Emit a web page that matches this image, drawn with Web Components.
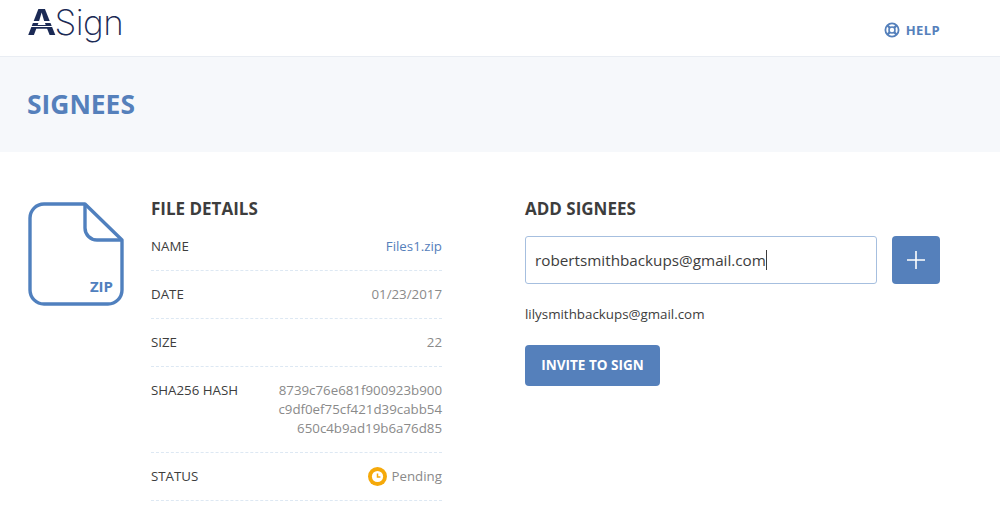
<!DOCTYPE html>
<html>
<head>
<meta charset="utf-8">
<title>Signees</title>
<style>
  html, body { margin: 0; background: #fff; }
  body { font-family: "Open Sans", sans-serif; color: #3d3d3d; overflow: hidden; }
</style>
</head>
<body>
<app-header></app-header>
<page-title>SIGNEES</page-title>
<main-layout>
  <file-icon slot="icon"></file-icon>
  <file-details slot="details">
    <detail-row label="NAME"><span style="color:#5580bb">Files1.zip</span></detail-row>
    <detail-row label="DATE">01/23/2017</detail-row>
    <detail-row label="SIZE">22</detail-row>
    <detail-row label="SHA256 HASH" tall>8739c76e681f900923b900<br>c9df0ef75cf421d39cabb54<br>650c4b9ad19b6a76d85</detail-row>
    <detail-row label="STATUS"><status-pending>Pending</status-pending></detail-row>
  </file-details>
  <add-signees slot="signees"></add-signees>
</main-layout>

<script>
class AppHeader extends HTMLElement {
  constructor() {
    super();
    this.attachShadow({ mode: 'open' }).innerHTML = `
      <style>
        :host { display: flex; justify-content: space-between; align-items: flex-start; height: 56px; border-bottom: 1px solid #e9edf3; padding: 0 60px 0 27px; }
        .logo { display: flex; align-items: baseline; color: #1b2a55; }
        .a { display: inline-block; padding: 0 1px; margin: 0 -1px; font: 600 35px/44px Inter, sans-serif; color: transparent;
             transform: scaleX(1.14); transform-origin: left;
             background: linear-gradient(#1b2a55 0 21.5px, #fff 21.5px 23px, #1b2a55 23px 26px, #fff 26px 27.5px, #1b2a55 27.5px);
             -webkit-background-clip: text; background-clip: text; }
        .sign { margin-left: 2px; font: 200 35px/44px Inter, sans-serif; letter-spacing: -.5px; }
        .help { display: flex; align-items: center; gap: 6px; margin-top: 21px; color: #5580bb; font: 700 13px/18px "Open Sans", sans-serif; letter-spacing: .4px; }
        svg { display: block; }
      </style>
      <div class="logo"><span class="a">A</span><span class="sign">Sign</span></div>
      <div class="help">
        <svg width="16" height="16" viewBox="0 0 16 16" fill="none" stroke="#5580bb">
          <circle cx="8" cy="8" r="6.6" stroke-width="1.8"/>
          <circle cx="8" cy="8" r="3" stroke-width="1.6"/>
          <path d="M3.4 3.4l2.5 2.5M12.6 3.4l-2.5 2.5M3.4 12.6l2.5-2.5M12.6 12.6l-2.5-2.5" stroke-width="2.2"/>
        </svg>
        <span>HELP</span>
      </div>`;
  }
}
customElements.define('app-header', AppHeader);

class PageTitle extends HTMLElement {
  constructor() {
    super();
    this.attachShadow({ mode: 'open' }).innerHTML = `
      <style>
        :host { display: block; height: 95px; background: #f6f8fb; padding-left: 27px; color: #5580bb; font: 700 26.4px/95px "Open Sans", sans-serif; }
      </style>
      <slot></slot>`;
  }
}
customElements.define('page-title', PageTitle);

class MainLayout extends HTMLElement {
  constructor() {
    super();
    this.attachShadow({ mode: 'open' }).innerHTML = `
      <style>
        :host { display: grid; grid-template-columns: 123px 292px 351px; padding: 47px 0 0 28px; }
        .s { display: block; margin-left: 82px; width: 415px; }
      </style>
      <slot name="icon"></slot>
      <slot name="details"></slot>
      <div class="s"><slot name="signees"></slot></div>`;
  }
}
customElements.define('main-layout', MainLayout);

class FileIcon extends HTMLElement {
  constructor() {
    super();
    this.attachShadow({ mode: 'open' }).innerHTML = `
      <style>
        :host { display: block; position: relative; width: 96px; height: 104px; margin-top: 3px; }
        svg { display: block; }
        span { position: absolute; right: 11px; bottom: 10px; color: #5080be; font: 700 15px/20px "Open Sans", sans-serif; }
      </style>
      <svg width="96" height="104" viewBox="0 0 96 104" fill="none" stroke="#5080be" stroke-width="3.4" stroke-linejoin="round">
        <path d="M57 2H16A14 14 0 0 0 2 16V88A14 14 0 0 0 16 102H80A14 14 0 0 0 94 88V38Z"/>
        <path d="M57 2V26A12 12 0 0 0 69 38H94"/>
      </svg>
      <span>ZIP</span>`;
  }
}
customElements.define('file-icon', FileIcon);

class FileDetails extends HTMLElement {
  constructor() {
    super();
    this.attachShadow({ mode: 'open' }).innerHTML = `
      <style>
        :host { display: block; width: 291px; }
        h2 { margin: 0 0 4px; color: #3d3d3d; font: 700 17px/20px "Open Sans", sans-serif; }
      </style>
      <h2>FILE DETAILS</h2>
      <slot></slot>`;
  }
}
customElements.define('file-details', FileDetails);

class DetailRow extends HTMLElement {
  constructor() {
    super();
    const root = this.attachShadow({ mode: 'open' });
    root.innerHTML = `
      <style>
        :host { display: flex; justify-content: space-between; align-items: flex-start; box-sizing: border-box; height: 48px; padding-top: 14px; border-bottom: 1px dashed #dde8f3; font: 400 13.3px/19px "Open Sans", sans-serif; }
        :host([tall]) { height: 86px; }
        .label { color: #3d3d3d; }
        .value { color: #8a8a8a; text-align: right; }
      </style>
      <span class="label"></span>
      <span class="value"><slot></slot></span>`;
    root.querySelector('.label').textContent = this.getAttribute('label');
  }
}
customElements.define('detail-row', DetailRow);

class StatusPending extends HTMLElement {
  constructor() {
    super();
    this.attachShadow({ mode: 'open' }).innerHTML = `
      <style>
        :host { display: inline-flex; align-items: center; gap: 5px; }
        svg { display: block; }
      </style>
      <svg width="19" height="19" viewBox="0 0 19 19">
        <circle cx="9.5" cy="9.5" r="9.5" fill="#f5a90a"/>
        <circle cx="9.5" cy="9.5" r="5.6" fill="#fff"/>
        <path d="M9.5 6.5V10H12.4" fill="none" stroke="#f5a90a" stroke-width="1.5"/>
      </svg>
      <span><slot></slot></span>`;
  }
}
customElements.define('status-pending', StatusPending);

class AddSignees extends HTMLElement {
  constructor() {
    super();
    this.attachShadow({ mode: 'open' }).innerHTML = `
      <style>
        :host { display: block; }
        h2 { margin: 0 0 17px; color: #3d3d3d; font: 700 17px/20px "Open Sans", sans-serif; }
        .row { display: flex; gap: 15px; }
        .field { box-sizing: border-box; width: 352px; height: 48px; padding: 0 9px; border: 1px solid #a6bfdf; border-radius: 3px; color: #3d3d3d; font: 400 15.25px/46px "Open Sans", sans-serif; display: flex; align-items: center; }
        .caret { display: inline-block; width: 1px; height: 20px; background: #3d3d3d; }
        .plus { width: 48px; height: 48px; border-radius: 4px; background: #5580bb; display: flex; align-items: center; justify-content: center; }
        svg { display: block; }
        .email { margin: 21px 0 22px; color: #3d3d3d; font: 400 13.35px/18px "Open Sans", sans-serif; }
        .invite { width: 135px; height: 41px; border-radius: 4px; background: #5580bb; color: #fff; text-align: center; font: 700 13.5px/41px "Open Sans", sans-serif; }
      </style>
      <h2>ADD SIGNEES</h2>
      <div class="row">
        <div class="field"><span>robertsmithbackups@gmail.com</span><span class="caret"></span></div>
        <div class="plus">
          <svg width="20" height="20" viewBox="0 0 20 20" stroke="#fff" stroke-width="1.6"><path d="M10 1V19M1 10H19"/></svg>
        </div>
      </div>
      <div class="email">lilysmithbackups@gmail.com</div>
      <div class="invite">INVITE TO SIGN</div>`;
  }
}
customElements.define('add-signees', AddSignees);
</script>
</body>
</html>
